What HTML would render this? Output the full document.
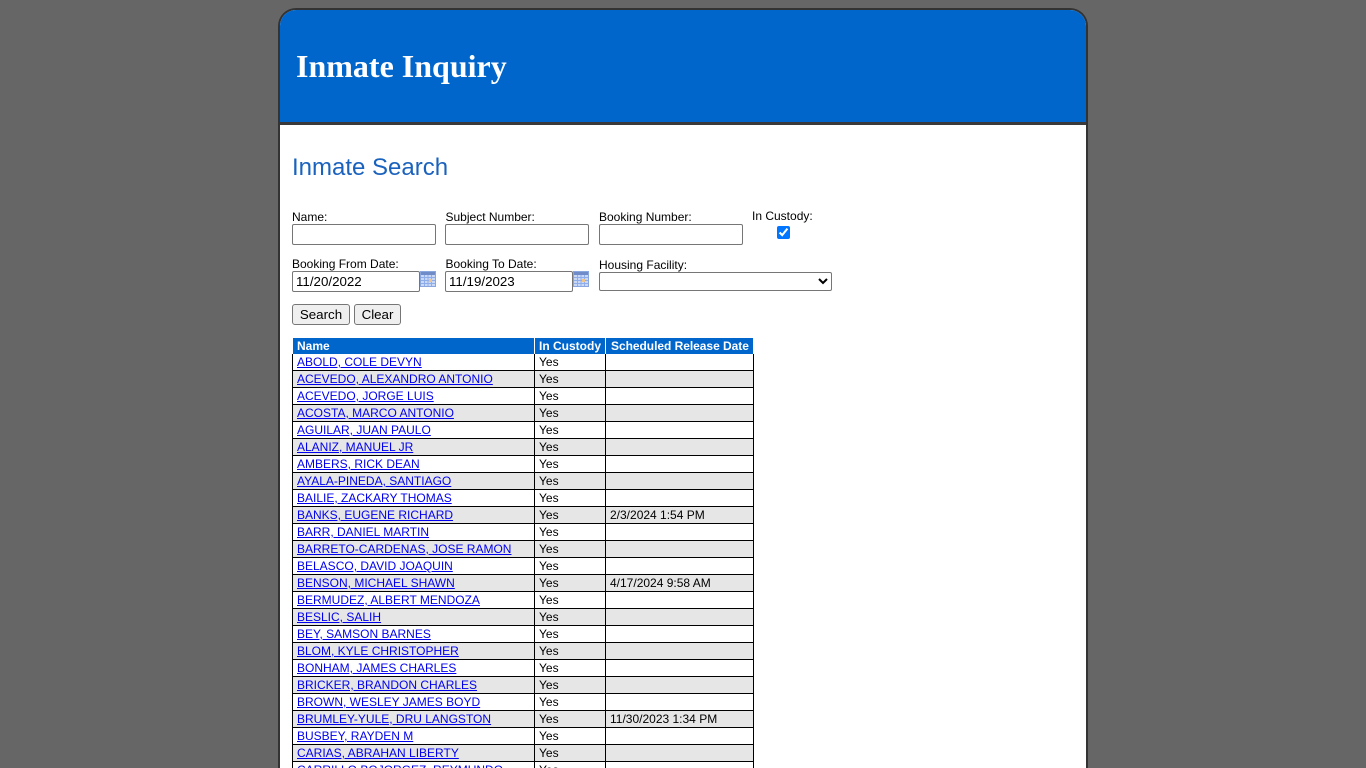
<!DOCTYPE html>
<html>
<head>
<meta charset="utf-8">
<title>Inmate Inquiry</title>
<style>
html,body{margin:0;padding:0;width:1366px;height:768px;overflow:hidden;background:#666;font-family:"Liberation Sans",sans-serif;}
#page{position:absolute;left:0;top:0;width:1366px;height:768px;overflow:hidden;background:#666;}
#wrap{position:absolute;left:278px;top:8px;width:806px;height:760px;border:2px solid #333;border-bottom:0;border-radius:18px 18px 0 0;background:#fff;overflow:hidden;}
#head{position:absolute;left:0;top:0;width:806px;height:112px;background:#0066cc;border-bottom:3px solid #3a3a3a;}
#head div{position:absolute;left:16px;top:36px;font:bold 32px/40px "Liberation Serif",serif;color:#fff;white-space:nowrap;}
.abs{position:absolute;}
h1{position:absolute;left:292px;top:154px;margin:0;font:normal 24px/28px "Liberation Sans",sans-serif;color:#1a62bd;white-space:nowrap;}
.l{position:absolute;font-size:12px;line-height:14px;color:#000;white-space:nowrap;}
input[type=text],select{position:absolute;box-sizing:border-box;margin:0;border:1px solid #767676;border-radius:2px;background:#fff;font:13.333px "Liberation Sans",sans-serif;color:#000;padding:0 3px 1px;}
button{position:absolute;box-sizing:border-box;margin:0;height:21px;padding:0 0 1px;border:1px solid #767676;border-radius:3px;background:#efefef;font:13.333px "Liberation Sans",sans-serif;color:#000;}
#clip{position:absolute;left:292px;top:337px;width:462px;height:431px;overflow:hidden;}
table{position:absolute;left:0;top:0;width:461px;border-collapse:collapse;table-layout:fixed;font-size:12px;line-height:14px;color:#000;}
th{background:#0066cc;color:#fff;text-align:left;font-weight:bold;padding:1px 4px 1px;height:14px;vertical-align:top;border:1px solid #fff;border-bottom:0;white-space:nowrap;overflow:hidden;}
th.t{padding-left:5px;padding-right:3px;letter-spacing:-.04px;}
td{padding:1px 4px;height:14px;border:1px solid #000;white-space:nowrap;overflow:hidden;}
tr.h + tr td{border-top:0;}
tr.a td{background:#e6e6e6;}
a{color:#0000ee;text-decoration:underline;}
</style>
</head>
<body>
<div id="page">
<div id="wrap"><div id="head"><div>Inmate Inquiry</div></div></div>
<h1>Inmate Search</h1>

<span class="l" style="left:292px;top:210px">Name:</span>
<input type="text" style="left:292px;top:224px;width:144px;height:21px">
<span class="l" style="left:445.5px;top:210px">Subject Number:</span>
<input type="text" style="left:445px;top:224px;width:144px;height:21px">
<span class="l" style="left:599px;top:210px">Booking Number:</span>
<input type="text" style="left:599px;top:224px;width:144px;height:21px">
<span class="l" style="left:752px;top:209px">In Custody:</span>
<input type="checkbox" checked style="position:absolute;left:777px;top:226px;width:13px;height:13px;margin:0">

<span class="l" style="left:292px;top:257px">Booking From Date:</span>
<input type="text" value="11/20/2022" style="left:292px;top:271px;width:128px;height:21px">
<svg class="abs" style="left:420px;top:271px" width="16" height="16" viewBox="0 0 16 16">
<rect x=".5" y=".5" width="15" height="15" fill="#c8d8f5" stroke="#8aa6de"/><rect x="1" y="1" width="14" height="3" fill="#6f8cc8"/>
<path d="M1 6.5H15M1 9.5H15M1 12.5H15M4.5 4V15M8 4V15M11.5 4V15" stroke="#8fadea" stroke-width="1"/><rect x="9" y="8" width="3" height="3" fill="#eec48a"/></svg>
<span class="l" style="left:445.5px;top:257px">Booking To Date:</span>
<input type="text" value="11/19/2023" style="left:445px;top:271px;width:128px;height:21px">
<svg class="abs" style="left:573px;top:271px" width="16" height="16" viewBox="0 0 16 16">
<rect x=".5" y=".5" width="15" height="15" fill="#c8d8f5" stroke="#8aa6de"/><rect x="1" y="1" width="14" height="3" fill="#6f8cc8"/>
<path d="M1 6.5H15M1 9.5H15M1 12.5H15M4.5 4V15M8 4V15M11.5 4V15" stroke="#8fadea" stroke-width="1"/><rect x="9" y="8" width="3" height="3" fill="#eec48a"/></svg>
<span class="l" style="left:599px;top:258px">Housing Facility:</span>
<select style="left:599px;top:272px;width:233px;height:19px;padding:0"><option></option></select>

<button style="left:292px;top:304px;width:58px">Search</button>
<button style="left:354px;top:304px;width:47px">Clear</button>

<div id="clip">
<table>
<colgroup><col style="width:242px"><col style="width:71px"><col style="width:148px"></colgroup>
<tr class="h"><th>Name</th><th>In Custody</th><th class="t">Scheduled Release Date</th></tr>
<tr><td><a href="#">ABOLD, COLE DEVYN</a></td><td>Yes</td><td></td></tr>
<tr class="a"><td><a href="#">ACEVEDO, ALEXANDRO ANTONIO</a></td><td>Yes</td><td></td></tr>
<tr><td><a href="#">ACEVEDO, JORGE LUIS</a></td><td>Yes</td><td></td></tr>
<tr class="a"><td><a href="#">ACOSTA, MARCO ANTONIO</a></td><td>Yes</td><td></td></tr>
<tr><td><a href="#">AGUILAR, JUAN PAULO</a></td><td>Yes</td><td></td></tr>
<tr class="a"><td><a href="#">ALANIZ, MANUEL JR</a></td><td>Yes</td><td></td></tr>
<tr><td><a href="#">AMBERS, RICK DEAN</a></td><td>Yes</td><td></td></tr>
<tr class="a"><td><a href="#">AYALA-PINEDA, SANTIAGO</a></td><td>Yes</td><td></td></tr>
<tr><td><a href="#">BAILIE, ZACKARY THOMAS</a></td><td>Yes</td><td></td></tr>
<tr class="a"><td><a href="#">BANKS, EUGENE RICHARD</a></td><td>Yes</td><td>2/3/2024 1:54 PM</td></tr>
<tr><td><a href="#">BARR, DANIEL MARTIN</a></td><td>Yes</td><td></td></tr>
<tr class="a"><td><a href="#">BARRETO-CARDENAS, JOSE RAMON</a></td><td>Yes</td><td></td></tr>
<tr><td><a href="#">BELASCO, DAVID JOAQUIN</a></td><td>Yes</td><td></td></tr>
<tr class="a"><td><a href="#">BENSON, MICHAEL SHAWN</a></td><td>Yes</td><td>4/17/2024 9:58 AM</td></tr>
<tr><td><a href="#">BERMUDEZ, ALBERT MENDOZA</a></td><td>Yes</td><td></td></tr>
<tr class="a"><td><a href="#">BESLIC, SALIH</a></td><td>Yes</td><td></td></tr>
<tr><td><a href="#">BEY, SAMSON BARNES</a></td><td>Yes</td><td></td></tr>
<tr class="a"><td><a href="#">BLOM, KYLE CHRISTOPHER</a></td><td>Yes</td><td></td></tr>
<tr><td><a href="#">BONHAM, JAMES CHARLES</a></td><td>Yes</td><td></td></tr>
<tr class="a"><td><a href="#">BRICKER, BRANDON CHARLES</a></td><td>Yes</td><td></td></tr>
<tr><td><a href="#">BROWN, WESLEY JAMES BOYD</a></td><td>Yes</td><td></td></tr>
<tr class="a"><td><a href="#">BRUMLEY-YULE, DRU LANGSTON</a></td><td>Yes</td><td>11/30/2023 1:34 PM</td></tr>
<tr><td><a href="#">BUSBEY, RAYDEN M</a></td><td>Yes</td><td></td></tr>
<tr class="a"><td><a href="#">CARIAS, ABRAHAN LIBERTY</a></td><td>Yes</td><td></td></tr>
<tr><td><a href="#">CARRILLO BOJORGEZ, REYMUNDO</a></td><td>Yes</td><td></td></tr>
</table>
</div>
</div>
</body>
</html>
